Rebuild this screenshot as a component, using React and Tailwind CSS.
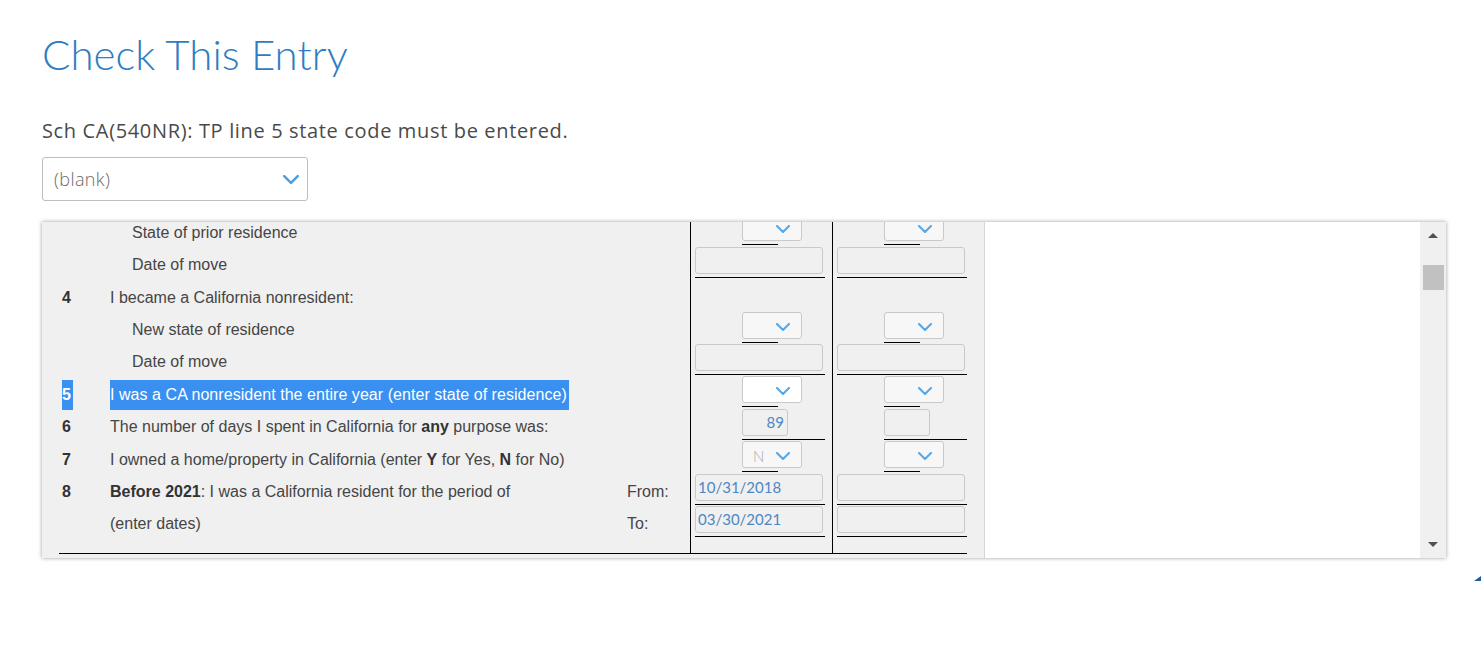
import React from "react";

const sans = { fontFamily: '"Liberation Sans", Arial, sans-serif' };

function Chevron({ className = "" }) {
  return (
    <svg viewBox="0 0 14 8" className={className} fill="none">
      <polyline points="1,1 7,7 13,1" stroke="currentColor" strokeWidth="2.2" strokeLinecap="round" strokeLinejoin="round" />
    </svg>
  );
}

// dropdown with short underline
function Dropdown({ value, white }) {
  return (
    <div className="ml-[51px] -mt-[2px] flex flex-col">
      <div
        className={`relative w-[60px] h-[27px] border border-[#c9c9c9] rounded-[3px] flex items-center ${
          white ? "bg-white" : "bg-[#f7f7f7]"
        }`}
      >
        {value && (
          <span className="ml-[10px] mt-[4px] text-[15px] text-[#a9a9a9] font-['Lato',sans-serif] font-light">{value}</span>
        )}
        <Chevron className="absolute right-[11px] top-[10px] w-[14px] h-[8px] text-[#5aa9e6]" />
      </div>
      <div className="w-[36px] h-px bg-black mt-[3px]" />
    </div>
  );
}

function Input({ value, small }) {
  return (
    <div className={`${small ? "ml-[51px]" : "ml-[4px]"} -mt-[2px] flex flex-col`}>
      <div
        className={`${
          small ? "w-[46px] justify-end pr-[3px]" : "w-[128px] pl-[2px]"
        } h-[27px] border border-[#c9c9c9] rounded-[3px] bg-[#f0f0f0] flex items-center text-[15px] text-[#4f86c2] font-['Lato',sans-serif]`}
      >
        {value}
      </div>
      <div className={`${small ? "w-[83px]" : "w-[130px]"} h-px bg-black mt-[3px]`} />
    </div>
  );
}

function Control({ c }) {
  if (!c) return null;
  if (c.type === "dd") return <Dropdown value={c.value} white={c.white} />;
  return <Input value={c.value} small={c.type === "small"} />;
}

const rows = [
  { h: "h-[33px]", indent: true, label: "State of prior residence", c1: { type: "dd" }, c2: { type: "dd" } },
  { h: "h-[32px]", indent: true, label: "Date of move", c1: { type: "in" }, c2: { type: "in" } },
  { h: "h-[33px]", num: "4", label: "I became a California nonresident:" },
  { h: "h-[32px]", indent: true, label: "New state of residence", c1: { type: "dd" }, c2: { type: "dd" } },
  { h: "h-[32px]", indent: true, label: "Date of move", c1: { type: "in" }, c2: { type: "in" } },
  {
    h: "h-[33px]",
    num: "5",
    selected: true,
    label: "I was a CA nonresident the entire year (enter state of residence)",
    c1: { type: "dd", white: true },
    c2: { type: "dd" },
  },
  {
    h: "h-[32px]",
    num: "6",
    label: (
      <>
        The number of days I spent in California for <b className="text-[#333]">any</b> purpose was:
      </>
    ),
    c1: { type: "small", value: "89" },
    c2: { type: "small" },
  },
  {
    h: "h-[33px]",
    num: "7",
    label: (
      <>
        I owned a home/property in California (enter <b className="text-[#333]">Y</b> for Yes,{" "}
        <b className="text-[#333]">N</b> for No)
      </>
    ),
    c1: { type: "dd", value: "N" },
    c2: { type: "dd" },
  },
  {
    h: "h-[32px]",
    num: "8",
    label: (
      <>
        <b className="text-[#333]">Before 2021</b>: I was a California resident for the period of
      </>
    ),
    side: "From:",
    c1: { type: "in", value: "10/31/2018" },
    c2: { type: "in" },
  },
  { h: "h-[32px]", label: "(enter dates)", side: "To:", c1: { type: "in", value: "03/30/2021" }, c2: { type: "in" } },
];

function Row({ r }) {
  return (
    <div className={`flex ${r.h}`}>
      <div className="w-[648px] flex items-center text-[16px] text-[#454545]" style={sans}>
        <div className="w-[68px] pl-[20px]">
          {r.num &&
            (r.selected ? (
              <span className="inline-block bg-[#3990f0] text-white font-bold leading-[30px] pr-[2px]">{r.num}</span>
            ) : (
              <span className="font-bold text-[#333]">{r.num}</span>
            ))}
        </div>
        <div className={`flex-1 ${r.indent ? "pl-[22px]" : ""}`}>
          {r.selected ? (
            <span className="inline-block bg-[#3990f0] text-white leading-[30px] pr-[2px] tracking-[0.05px]">{r.label}</span>
          ) : (
            r.label
          )}
        </div>
        {r.side && <div className="w-[63px]">{r.side}</div>}
      </div>
      <div className="w-[142px] border-l border-black flex items-start">
        <Control c={r.c1} />
      </div>
      <div className="flex-1 border-l border-black flex items-start">
        <Control c={r.c2} />
      </div>
    </div>
  );
}

export default function App() {
  return (
    <div className="relative w-[1481px] h-[648px] bg-white overflow-hidden">
      <div className="pl-[42px] pt-[33px]">
        <h1 className="text-[42px] leading-none font-light text-[#2f7cc1] font-['Lato',sans-serif] h-[43px]">
          Check This Entry
        </h1>
        <p className="mt-[45px] text-[20px] leading-none text-[#4a4a4a] tracking-[0.65px] font-['Open_Sans',sans-serif]">
          Sch CA(540NR): TP line 5 state code must be entered.
        </p>
        <div className="mt-[16px] w-[266px] h-[44px] border border-[#bdbdbd] rounded-[3px] flex items-center justify-between pl-[11px] pr-[8px]">
          <span className="text-[18px] text-[#6a6a6a] tracking-[0.4px] font-['Open_Sans',sans-serif] font-light">(blank)</span>
          <Chevron className="w-[16px] h-[9px] text-[#4a9fe2]" />
        </div>
      </div>

      {/* scroll panel */}
      <div className="ml-[42px] mt-[21px] w-[1404px] h-[336px] flex shadow-[0_0_4px_rgba(0,0,0,0.4)]">
        <div className="w-[943px] h-full bg-[#f0f0f0] border-r border-[#d6d6d6] overflow-hidden">
          <div className="-mt-[6px]">
            {rows.map((r, i) => (
              <Row key={i} r={r} />
            ))}
            <div className="flex h-[13px]">
              <div className="w-[648px]" />
              <div className="w-[142px] border-l border-black" />
              <div className="flex-1 border-l border-black" />
            </div>
            <div className="ml-[17px] w-[908px] h-px bg-black" />
          </div>
        </div>
        <div className="flex-1 bg-white" />
        <div className="w-[26px] h-full bg-[#f0f0f0] flex flex-col items-center">
          <div className="mt-[11px] w-0 h-0 border-l-[5px] border-r-[5px] border-b-[5px] border-l-transparent border-r-transparent border-b-[#505050]" />
          <div className="mt-[27px] w-[21px] h-[25px] bg-[#c1c1c1]" />
          <div className="mt-auto mb-[11px] w-0 h-0 border-l-[5px] border-r-[5px] border-t-[5px] border-l-transparent border-r-transparent border-t-[#505050]" />
        </div>
      </div>

      {/* clipped element at right edge */}
      <div className="absolute left-[1474px] top-[576px] w-0 h-0 border-l-[7px] border-b-[5px] border-l-transparent border-b-[#1f5c9c]" />
    </div>
  );
}
